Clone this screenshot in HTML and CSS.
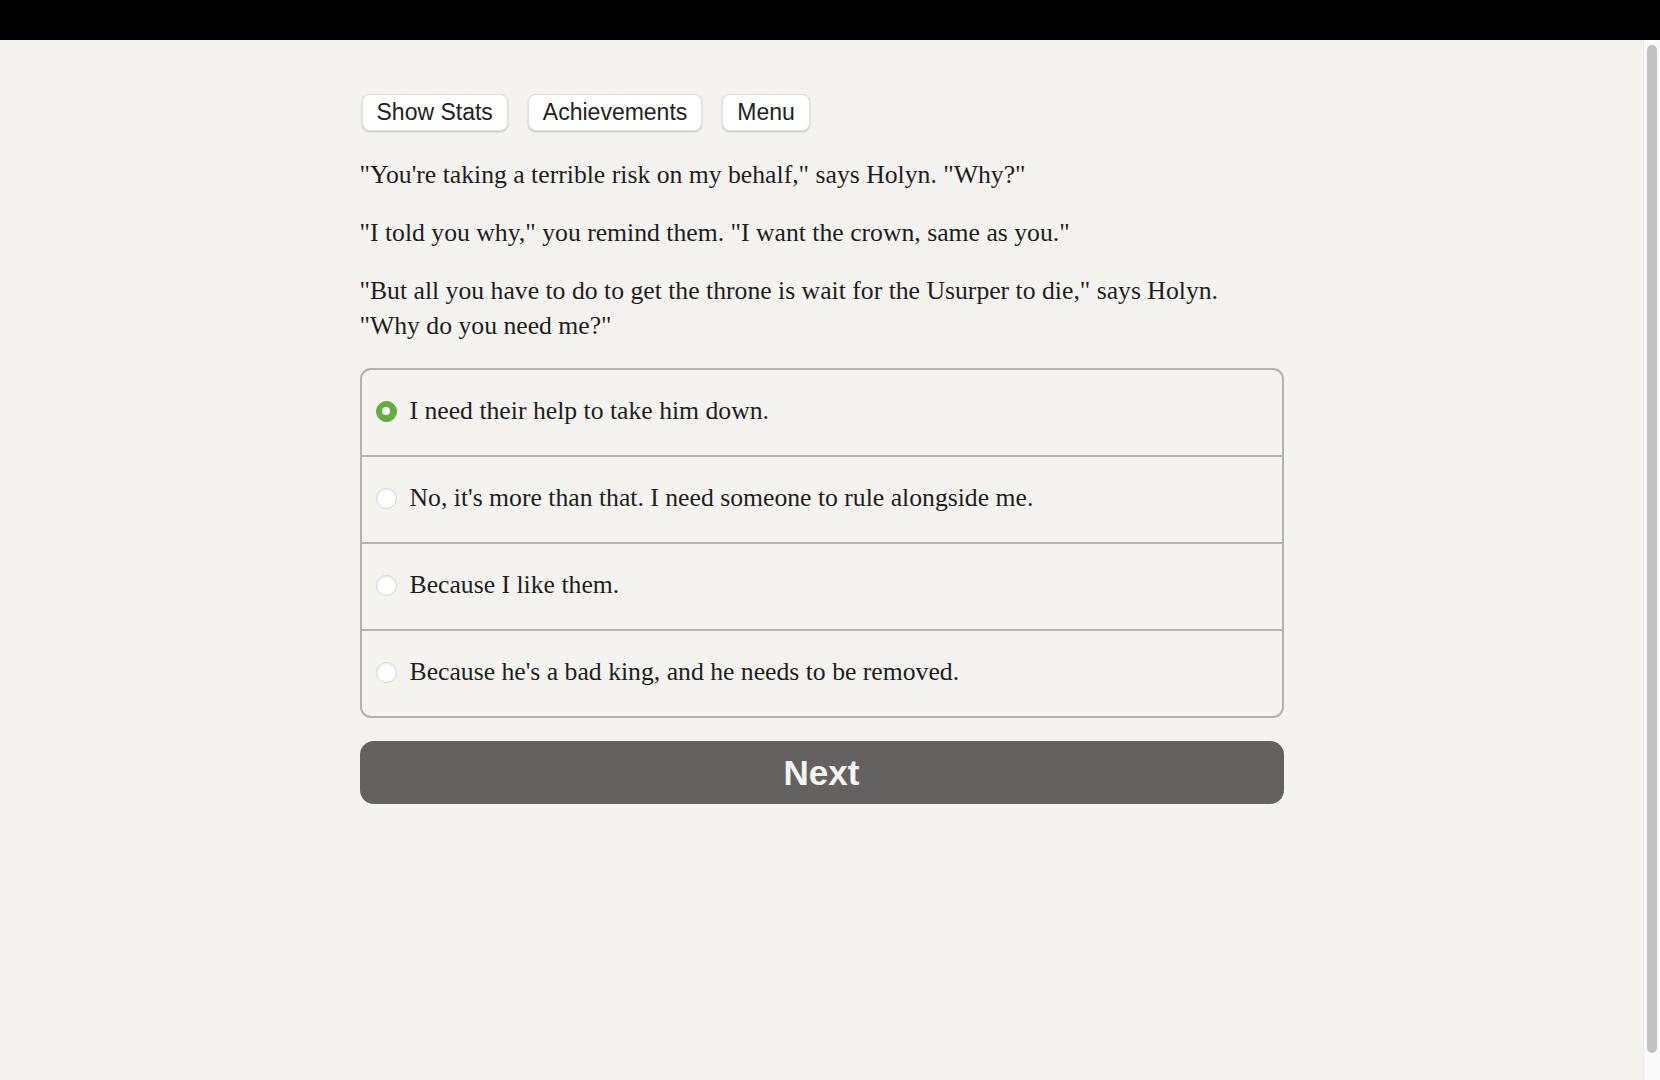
FILE: index.html
```html
<!DOCTYPE html>
<html lang="en">
<head>
<meta charset="utf-8">
<title>Choice</title>
<link rel="stylesheet" href="styles.css">
</head>
<body>
<div class="topbar"></div>
<div class="window">
  <div class="scroller">
    <main class="page">
      <nav class="toolbar">
        <button class="tool-btn" type="button">Show Stats</button>
        <button class="tool-btn" type="button">Achievements</button>
        <button class="tool-btn" type="button">Menu</button>
      </nav>
      <p class="story">"You're taking a terrible risk on my behalf," says Holyn. "Why?"</p>
      <p class="story">"I told you why," you remind them. "I want the crown, same as you."</p>
      <p class="story">"But all you have to do to get the throne is wait for the Usurper to die," says Holyn. "Why do you need me?"</p>
      <div class="choices">
        <label class="choice"><span class="radio radio-on"></span><span class="choice-text">I need their help to take him down.</span></label>
        <label class="choice"><span class="radio"></span><span class="choice-text">No, it's more than that. I need someone to rule alongside me.</span></label>
        <label class="choice"><span class="radio"></span><span class="choice-text">Because I like them.</span></label>
        <label class="choice"><span class="radio"></span><span class="choice-text">Because he's a bad king, and he needs to be removed.</span></label>
      </div>
      <button class="next-btn" type="button">Next</button>
    </main>
  </div>
  <div class="scrollbar"><div class="scroll-thumb"></div></div>
</div>
</body>
</html>
```

FILE: styles.css
```css
html, body {
  margin: 0;
  padding: 0;
  height: 100%;
  overflow: hidden;
  background: #f4f3ef;
}

body {
  display: flex;
  flex-direction: column;
}

.topbar {
  flex: 0 0 40px;
  background: #000;
}

.window {
  flex: 1 1 auto;
  display: flex;
  min-height: 0;
}

.scroller {
  flex: 1 1 auto;
  overflow: hidden;
  background: #f4f3ef;
}

.scrollbar {
  flex: 0 0 17px;
  box-sizing: border-box;
  background: #fafafa;
  border-left: 1px solid #e8e8e8;
  padding: 5px 3px 27px 3px;
  display: flex;
}

.scroll-thumb {
  flex: 1 1 auto;
  background: #c1c1c1;
  border-radius: 5px;
}

.page {
  width: 924px;
  margin: 0 auto;
  padding-top: 54px;
  box-sizing: border-box;
  color: #1e1e1e;
}

.toolbar {
  display: flex;
  gap: 20px;
  padding-left: 2px;
}

.tool-btn {
  font-family: "Liberation Sans", Arial, sans-serif;
  font-size: 23px;
  color: #222;
  background: #fff;
  border: 1px solid #e2e1de;
  border-radius: 8px;
  height: 37px;
  padding: 0 14px;
  box-shadow: 0 1px 2px rgba(0, 0, 0, 0.22);
  cursor: pointer;
}

.story {
  font-family: "Liberation Serif", "Times New Roman", serif;
  font-size: 25.7px;
  line-height: 35px;
  margin: 23px 0 0;
}

.toolbar + .story {
  margin-top: 26px;
}

.choices {
  margin-top: 25px;
  border: 2px solid #b2b2b2;
  border-radius: 11px;
  display: flex;
  flex-direction: column;
}

.choice {
  display: flex;
  align-items: center;
  height: 85px;
  box-sizing: border-box;
  padding: 0 0 3px 14px;
  gap: 13px;
  font-family: "Liberation Serif", "Times New Roman", serif;
  font-size: 25.7px;
  color: #1e1e1e;
  cursor: pointer;
}

.choice + .choice {
  height: 87px;
  border-top: 2px solid #b2b2b2;
}

.radio {
  width: 21px;
  height: 21px;
  border-radius: 50%;
  box-sizing: border-box;
  background: #fff;
  border: 1px solid #d4d4d4;
  box-shadow: inset 0 1px 2px rgba(0, 0, 0, 0.08);
  display: flex;
  align-items: center;
  justify-content: center;
  flex: 0 0 auto;
}

.radio-on {
  background: #64ad3f;
  border-color: #5ea33a;
  box-shadow: none;
}

.radio-on::after {
  content: "";
  width: 8px;
  height: 8px;
  border-radius: 50%;
  background: #fff;
}

.next-btn {
  display: block;
  width: 100%;
  margin-top: 23px;
  height: 63px;
  border: none;
  border-radius: 14px;
  background: #636260;
  color: #f5f4f0;
  font-family: "Liberation Sans", Arial, sans-serif;
  font-weight: bold;
  font-size: 35px;
  cursor: pointer;
}
```
